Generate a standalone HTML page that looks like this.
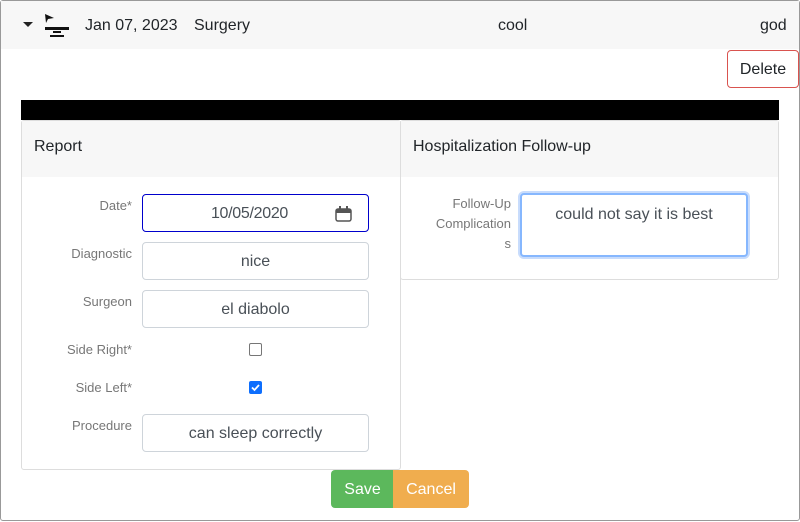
<!DOCTYPE html>
<html><head><style>
*{box-sizing:border-box}
body{margin:0;width:800px;height:522px;font-family:"Liberation Sans",sans-serif;position:relative;overflow:hidden;background:#fff;color:#212529}
.abs{position:absolute}
.outer{left:0;top:0;width:800px;height:521px;border:1px solid #999;border-radius:3px}
.hdr{left:1px;top:1px;width:798px;height:48px;background:#f7f7f7}
.t{font-size:16px;position:absolute}
.card{border:1px solid #ddd;border-radius:3px;background:#fff}
.ch{background:#f7f7f7;height:56px;padding:17px 12px;font-size:16px}
.lbl{font-size:13px;color:#777;text-align:right;position:absolute}
.inp{position:absolute;border:1px solid #ced4da;border-radius:4px;font-size:16px;color:#495057;text-align:center;line-height:38px;background:#fff}
.cb{position:absolute;width:13px;height:13px;border:1.5px solid #767676;border-radius:2px}
</style></head><body>
<div class="abs outer"></div>
<div class="abs hdr"></div>
<svg class="abs" style="left:22px;top:20px" width="12" height="8"><path d="M1 2h10l-5 5z" fill="#222"/></svg>
<svg class="abs" style="left:44px;top:13px" width="26" height="26"><path d="M1 1l9 4-6 1-2 4z" fill="#111"/><rect x="1" y="14" width="24" height="3" fill="#111"/><rect x="9" y="18" width="8" height="2" fill="#111"/><rect x="6" y="22" width="14" height="2" fill="#111"/></svg>
<div class="t" style="left:85px;top:17px">Jan 07, 2023</div>
<div class="t" style="left:194px;top:17px">Surgery</div>
<div class="t" style="left:498px;top:17px">cool</div>
<div class="t" style="left:760px;top:17px">god</div>
<div class="abs" style="left:727px;top:50px;width:72px;height:38px;border:1px solid #d9534f;border-radius:4px;font-size:16px;line-height:38px;text-align:center">Delete</div>
<div class="abs" style="left:21px;top:100px;width:758px;height:20px;background:#000"></div>
<div class="abs card" style="left:21px;top:120px;width:380px;height:350px"><div class="ch">Report</div></div>
<div class="abs card" style="left:400px;top:120px;width:379px;height:160px"><div class="ch">Hospitalization Follow-up</div></div>
<div class="lbl" style="left:30px;width:102px;top:198px">Date*</div>
<div class="lbl" style="left:30px;width:102px;top:246px">Diagnostic</div>
<div class="lbl" style="left:30px;width:102px;top:294px">Surgeon</div>
<div class="lbl" style="left:30px;width:102px;top:342px">Side Right*</div>
<div class="lbl" style="left:30px;width:102px;top:380px">Side Left*</div>
<div class="lbl" style="left:30px;width:102px;top:418px">Procedure</div>
<div class="inp" style="left:142px;top:194px;width:227px;height:38px;border-color:#00c;padding-right:12px;letter-spacing:-0.3px">10/05/2020
<svg style="position:absolute;right:16px;top:11px" width="17" height="16"><rect x="1" y="3" width="15" height="12" rx="2" fill="none" stroke="#555" stroke-width="1.5"/><rect x="1" y="3" width="15" height="4" fill="#555"/><rect x="4" y="0" width="2" height="4" fill="#555"/><rect x="11" y="0" width="2" height="4" fill="#555"/></svg></div>
<div class="inp" style="left:142px;top:242px;width:227px;height:38px">nice</div>
<div class="inp" style="left:142px;top:290px;width:227px;height:38px">el diabolo</div>
<div class="cb" style="left:249px;top:343px"></div>
<div class="cb" style="left:249px;top:381px;background:#0d6efd;border-color:#0d6efd"><svg style="position:absolute;left:0;top:0" width="11" height="11"><path d="M2 5.5l2.5 2.5 4.5-5" fill="none" stroke="#fff" stroke-width="1.8"/></svg></div>
<div class="inp" style="left:142px;top:414px;width:227px;height:38px">can sleep correctly</div>
<div class="lbl" style="left:429px;width:82px;top:194px;line-height:20px">Follow-Up Complication s</div>
<div class="inp" style="left:520px;top:193px;width:228px;height:64px;border:2px solid #86b7fe;box-shadow:0 0 0 2px #c8dcfc;line-height:20px;padding-top:10px">could not say it is best</div>
<div class="abs" style="left:331px;top:470px;width:63px;height:38px;background:#5cb85c;color:#fff;font-size:16px;line-height:40px;text-align:center;border-radius:4px 0 0 4px">Save</div>
<div class="abs" style="left:393px;top:470px;width:76px;height:38px;background:#f0ad4e;color:#fff;font-size:16px;line-height:40px;text-align:center;border-radius:0 4px 4px 0">Cancel</div>
</body></html>
